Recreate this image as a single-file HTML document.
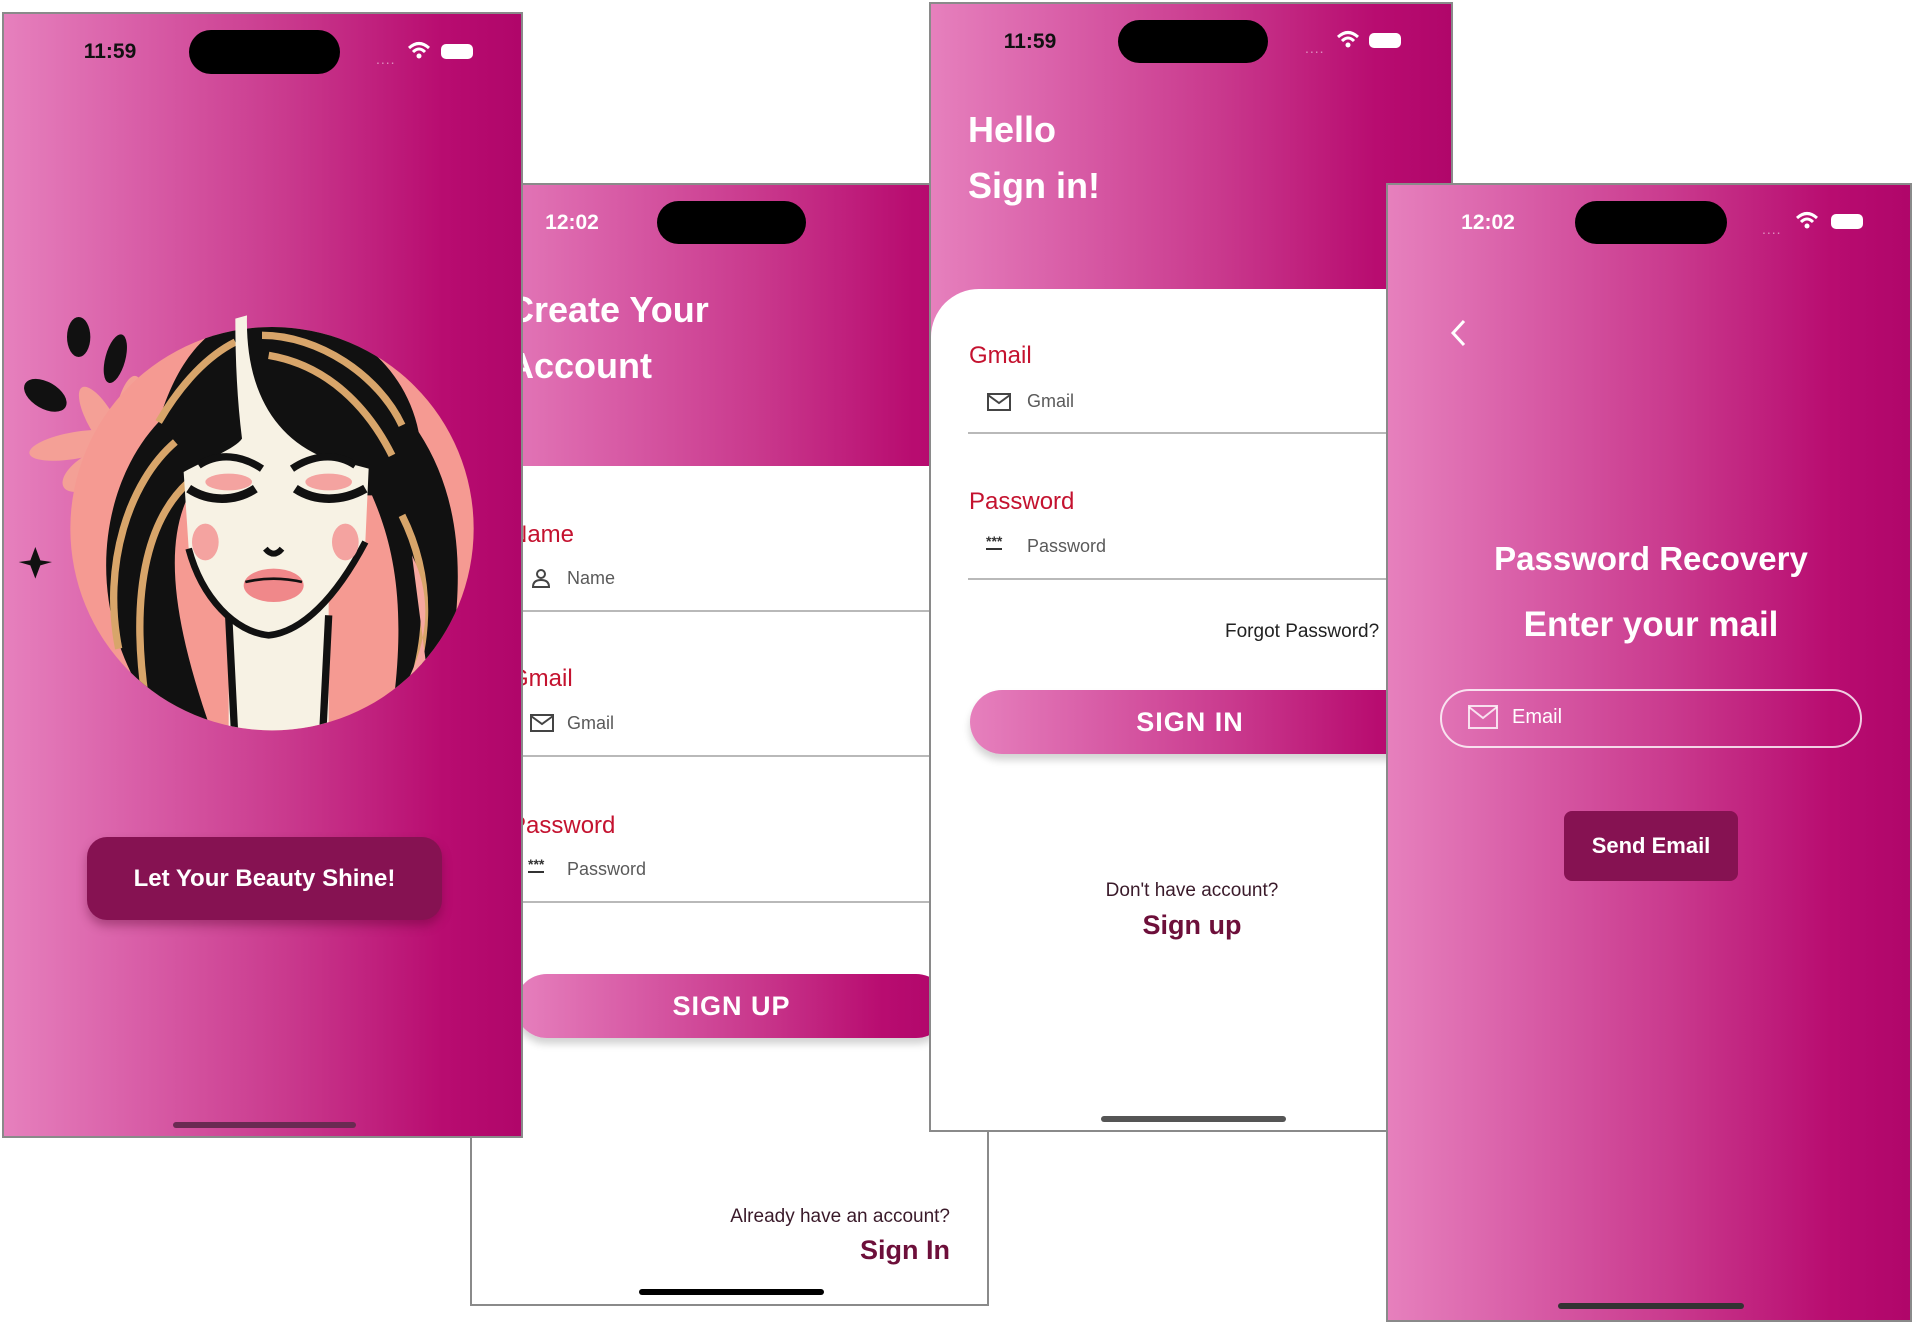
<!DOCTYPE html>
<html><head><meta charset="utf-8"><style>
*{margin:0;padding:0;box-sizing:border-box}
body{width:1914px;height:1322px;background:#fff;position:relative;overflow:hidden;font-family:"Liberation Sans",sans-serif}
.ph{position:absolute;overflow:hidden;border:2px solid #8a8a8a;background:#fff}
.grad{background:linear-gradient(90deg,#e680bd 0%,#d95fa8 25%,#c9398d 55%,#b80c70 85%,#b0066a 100%)}
.a{position:absolute;white-space:nowrap}
.isl{position:absolute;background:#000;border-radius:24px}
.time{position:absolute;font-size:21px;font-weight:bold;width:80px;text-align:center;line-height:24px}
.dots{position:absolute;font-size:14px;letter-spacing:1px;opacity:.5;line-height:10px}
.bat{position:absolute;width:32px;height:15px;border-radius:5px;background:#fff;border:2px solid rgba(255,255,255,.8)}
.title{position:absolute;color:#fff;font-weight:bold;font-size:36px;line-height:44px;white-space:nowrap}
.lbl{position:absolute;color:#c4122f;font-size:24px;line-height:28px}
.ph2{position:absolute;color:#5a5a5a;font-size:18px;line-height:22px}
.div{position:absolute;height:2px;background:#b9b9b9}
.pill{position:absolute;border-radius:40px;color:#fff;font-weight:bold;font-size:27px;text-align:center;box-shadow:0 6px 8px rgba(0,0,0,.18);letter-spacing:1px}
.home{position:absolute;height:6px;border-radius:3px}
</style></head><body>

<!-- Phone 2 (back) -->
<div class="ph" style="left:470px;top:183px;width:519px;height:1123px">
  <div class="grad a" style="left:0;top:0;width:519px;height:281px"></div>
  <div class="time" style="left:60px;top:26px;color:#fff">12:02</div>
  <div class="isl" style="left:185px;top:16px;width:149px;height:43px"></div>
  <div class="title" style="left:36px;top:103px">Create Your</div>
  <div class="title" style="left:36px;top:159px">Account</div>
  <div class="lbl" style="left:38px;top:336px">Name</div>
  <svg class="a" style="left:58px;top:382px" width="22" height="22" viewBox="0 0 22 22"><circle cx="11" cy="7" r="4" fill="none" stroke="#444" stroke-width="2"/><path d="M3 20 Q3 13 11 13 Q19 13 19 20 Z" fill="none" stroke="#444" stroke-width="2"/></svg>
  <div class="ph2" style="left:95px;top:382px">Name</div>
  <div class="div" style="left:36px;top:425px;width:480px"></div>
  <div class="lbl" style="left:38px;top:480px">Gmail</div>
  <svg class="a" style="left:58px;top:528px" width="24" height="20" viewBox="0 0 24 20"><rect x="1" y="2" width="22" height="16" fill="none" stroke="#444" stroke-width="2"/><path d="M1 3 L12 11 L23 3" fill="none" stroke="#444" stroke-width="2"/></svg>
  <div class="ph2" style="left:95px;top:527px">Gmail</div>
  <div class="div" style="left:36px;top:570px;width:480px"></div>
  <div class="lbl" style="left:38px;top:627px">Password</div>
  <div class="a" style="left:56px;top:672px;font-size:14px;font-weight:bold;color:#333;border-bottom:2px solid #333;line-height:14px">***</div>
  <div class="ph2" style="left:95px;top:673px">Password</div>
  <div class="div" style="left:36px;top:716px;width:480px"></div>
  <div class="pill grad" style="left:43px;top:789px;width:433px;height:64px;line-height:64px">SIGN UP</div>
  <div class="a" style="right:37px;top:1021px;font-size:19px;color:#3a1a2a">Already have an account?</div>
  <div class="a" style="right:37px;top:1050px;font-size:27px;font-weight:bold;color:#6d0f3a">Sign In</div>
  <div class="home" style="left:167px;top:1104px;width:185px;background:#000"></div>
</div>

<!-- Phone 1 -->
<div class="ph grad" style="left:2px;top:12px;width:521px;height:1126px">
  <div class="time" style="left:66px;top:26px;color:#111">11:59</div>
  <div class="isl" style="left:185px;top:16px;width:151px;height:44px"></div>
  <div class="dots" style="left:372px;top:40px;color:#fff">....</div>
  <svg class="a" style="left:403px;top:27px" width="24" height="20" viewBox="0 0 24 20"><path d="M2 7 Q12 -2 22 7" fill="none" stroke="#fff" stroke-width="3"/><path d="M6 11 Q12 5 18 11" fill="none" stroke="#fff" stroke-width="3"/><circle cx="12" cy="15" r="2.5" fill="#fff"/></svg>
  <div class="bat" style="left:437px;top:30px"></div>
  <svg class="a" style="left:-2px;top:268px" width="520" height="470" viewBox="0 0 1560 1410">
    <defs><clipPath id="cc"><circle cx="810" cy="740" r="605"/></clipPath></defs>
    <ellipse cx="230" cy="165" rx="35" ry="60" fill="#111"/>
    <ellipse cx="340" cy="230" rx="30" ry="75" fill="#111" transform="rotate(15 340 230)"/>
    <ellipse cx="130" cy="340" rx="70" ry="40" fill="#111" transform="rotate(30 130 340)"/>
    <g fill="#f4a096">
      <ellipse cx="220" cy="490" rx="140" ry="40" transform="rotate(-10 220 490)"/>
      <ellipse cx="300" cy="420" rx="40" ry="120" transform="rotate(-30 300 420)"/>
      <ellipse cx="380" cy="400" rx="40" ry="120" transform="rotate(10 380 400)"/>
      <ellipse cx="280" cy="560" rx="110" ry="50" transform="rotate(-30 280 560)"/>
    </g>
    <circle cx="810" cy="740" r="605" fill="#f59a92"/>
    <g clip-path="url(#cc)">
      <rect x="680" y="950" width="300" height="500" fill="#f7f2e4"/>
      <path d="M680 1000 L700 1400 M980 1000 L960 1400" stroke="#111" stroke-width="22" fill="none"/>
      <path d="M430 1250 C240 950 300 600 470 420 C520 250 600 150 710 105 L760 90 C950 70 1200 200 1250 450 C1380 650 1400 900 1320 1260 L1160 1360 C1220 1000 1180 800 1110 640 L560 640 C480 800 520 1050 640 1380 Z" fill="#111"/>
      <path d="M350 1100 C300 850 380 600 520 480 M430 1250 C380 900 450 700 560 600 M470 420 C540 300 620 220 700 180 M780 160 C950 160 1130 280 1200 430 M800 220 C980 250 1100 380 1170 520 M1200 700 C1300 900 1280 1100 1200 1300" stroke="#d8a56a" stroke-width="22" fill="none"/>
      <path d="M1230 820 C1320 1000 1250 1200 1100 1360 L1300 1360 Z" fill="#f7a8a0"/>
    </g>
    <path d="M700 110 L735 100 C730 300 800 450 950 520 L1100 560 L1090 780 C1000 950 900 1050 800 1060 C700 1050 600 950 560 800 L545 570 C620 530 700 500 720 470 C705 350 700 230 700 110 Z" fill="#f7f2e4"/>
    <path d="M560 800 C600 950 700 1050 800 1060 C900 1050 1000 950 1090 780" stroke="#111" stroke-width="20" fill="none"/>
    <path d="M590 550 C650 510 720 520 780 560 M870 560 C930 520 1000 510 1060 550" stroke="#111" stroke-width="22" fill="none"/>
    <ellipse cx="680" cy="600" rx="70" ry="25" fill="#f4a3a0"/>
    <ellipse cx="980" cy="600" rx="70" ry="25" fill="#f4a3a0"/>
    <path d="M560 620 C620 660 700 660 760 620 M880 620 C940 660 1020 660 1090 620" stroke="#111" stroke-width="26" fill="none"/>
    <ellipse cx="610" cy="780" rx="40" ry="55" fill="#f4a3a0"/>
    <ellipse cx="1030" cy="780" rx="40" ry="55" fill="#f4a3a0"/>
    <path d="M790 800 Q815 830 840 800" stroke="#111" stroke-width="18" fill="none"/>
    <ellipse cx="815" cy="910" rx="90" ry="50" fill="#f0888a"/>
    <path d="M730 900 Q815 880 900 900" stroke="#111" stroke-width="8" fill="none"/>
    <path d="M100 795 L115 835 L150 840 L115 850 L100 890 L85 850 L50 840 L85 835 Z" fill="#111"/>
  </svg>
  <div class="a" style="left:83px;top:823px;width:355px;height:83px;background:#861252;border-radius:20px;box-shadow:0 6px 10px rgba(80,0,40,.35);color:#fff;font-weight:bold;font-size:24px;line-height:83px;text-align:center">Let Your Beauty Shine!</div>
  <div class="home" style="left:169px;top:1108px;width:183px;background:#6a2a52"></div>
</div>

<!-- Phone 3 -->
<div class="ph" style="left:929px;top:2px;width:524px;height:1130px">
  <div class="grad a" style="left:0;top:0;width:524px;height:340px"></div>
  <div class="time" style="left:59px;top:26px;color:#111">11:59</div>
  <div class="isl" style="left:187px;top:16px;width:150px;height:43px"></div>
  <div class="dots" style="left:374px;top:39px;color:#fff">....</div>
  <svg class="a" style="left:405px;top:26px" width="24" height="20" viewBox="0 0 24 20"><path d="M2 7 Q12 -2 22 7" fill="none" stroke="#fff" stroke-width="3"/><path d="M6 11 Q12 5 18 11" fill="none" stroke="#fff" stroke-width="3"/><circle cx="12" cy="15" r="2.5" fill="#fff"/></svg>
  <div class="bat" style="left:438px;top:29px"></div>
  <div class="title" style="left:37px;top:104px">Hello</div>
  <div class="title" style="left:37px;top:160px">Sign in!</div>
  <div class="a" style="left:0;top:285px;width:524px;height:850px;background:#fff;border-top-left-radius:48px"></div>
  <div class="lbl" style="left:38px;top:338px">Gmail</div>
  <svg class="a" style="left:56px;top:388px" width="24" height="20" viewBox="0 0 24 20"><rect x="1" y="2" width="22" height="16" fill="none" stroke="#444" stroke-width="2"/><path d="M1 3 L12 11 L23 3" fill="none" stroke="#444" stroke-width="2"/></svg>
  <div class="ph2" style="left:96px;top:386px">Gmail</div>
  <div class="div" style="left:37px;top:428px;width:490px"></div>
  <div class="lbl" style="left:38px;top:484px">Password</div>
  <div class="a" style="left:55px;top:530px;font-size:14px;font-weight:bold;color:#333;border-bottom:2px solid #333;line-height:14px">***</div>
  <div class="ph2" style="left:96px;top:531px">Password</div>
  <div class="div" style="left:37px;top:574px;width:490px"></div>
  <div class="a" style="left:294px;top:617px;font-size:19px;color:#222">Forgot Password?</div>
  <div class="pill grad" style="left:39px;top:686px;width:480px;height:64px;line-height:64px;text-indent:-40px">SIGN IN</div>
  <div class="a" style="left:0;width:522px;text-align:center;top:876px;font-size:19px;color:#3a1a2a">Don't have account?</div>
  <div class="a" style="left:0;width:522px;text-align:center;top:906px;font-size:27px;font-weight:bold;color:#6d0f3a">Sign up</div>
  <div class="home" style="left:170px;top:1112px;width:185px;background:#555"></div>
</div>

<!-- Phone 4 -->
<div class="ph grad" style="left:1386px;top:183px;width:526px;height:1139px">
  <div class="time" style="left:60px;top:26px;color:#fff">12:02</div>
  <div class="isl" style="left:187px;top:16px;width:152px;height:43px"></div>
  <div class="dots" style="left:374px;top:39px;color:#fff">....</div>
  <svg class="a" style="left:407px;top:26px" width="24" height="20" viewBox="0 0 24 20"><path d="M2 7 Q12 -2 22 7" fill="none" stroke="#fff" stroke-width="3"/><path d="M6 11 Q12 5 18 11" fill="none" stroke="#fff" stroke-width="3"/><circle cx="12" cy="15" r="2.5" fill="#fff"/></svg>
  <div class="bat" style="left:443px;top:29px"></div>
  <svg class="a" style="left:60px;top:133px" width="20" height="30" viewBox="0 0 20 30"><path d="M16 3 L5 15 L16 27" fill="none" stroke="#fff" stroke-width="3"/></svg>
  <div class="a" style="left:0;width:526px;text-align:center;top:354px;font-size:33px;font-weight:bold;color:#fff;line-height:40px">Password Recovery</div>
  <div class="a" style="left:0;width:526px;text-align:center;top:418px;font-size:35px;font-weight:bold;color:#fff;line-height:44px">Enter your mail</div>
  <div class="a" style="left:52px;top:504px;width:422px;height:59px;border:2px solid rgba(255,255,255,.8);border-radius:30px"></div>
  <svg class="a" style="left:80px;top:520px" width="30" height="24" viewBox="0 0 30 24"><rect x="1" y="1" width="28" height="22" fill="none" stroke="rgba(255,255,255,.8)" stroke-width="2"/><path d="M1 2 L15 13 L29 2" fill="none" stroke="rgba(255,255,255,.8)" stroke-width="2"/></svg>
  <div class="a" style="left:124px;top:520px;font-size:20px;color:#fff;line-height:24px">Email</div>
  <div class="a" style="left:176px;top:626px;width:174px;height:70px;background:#861252;border-radius:8px;color:#fff;font-weight:bold;font-size:22px;line-height:70px;text-align:center">Send Email</div>
  <div class="home" style="left:170px;top:1118px;width:186px;background:#333"></div>
</div>
</body></html>
